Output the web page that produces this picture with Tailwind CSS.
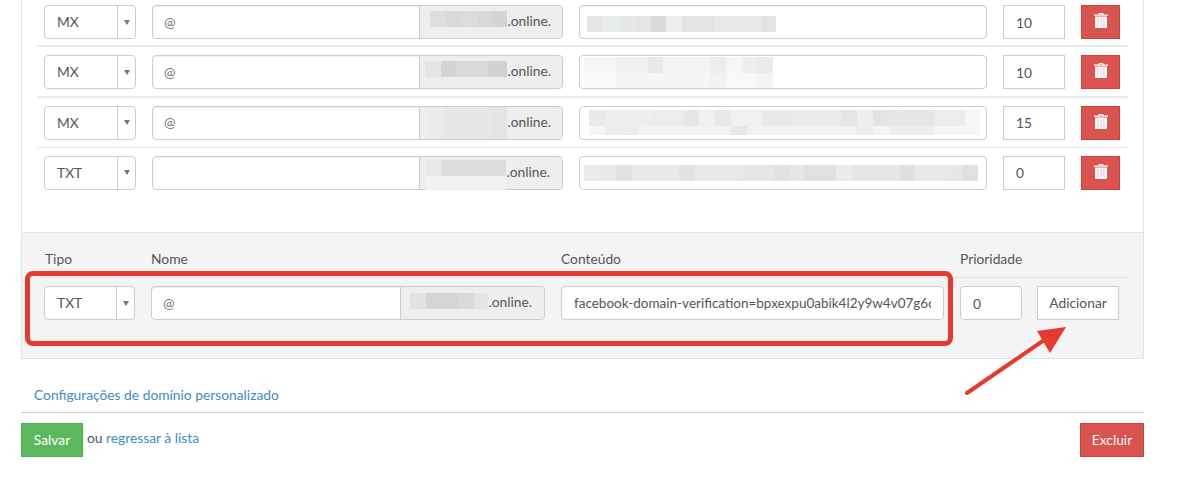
<!DOCTYPE html>
<html lang="pt">
<head>
<meta charset="utf-8">
<title>DNS</title>
<script src="https://cdn.jsdelivr.net/npm/@tailwindcss/browser@4"></script>
</head>
<body class="relative h-[497px] overflow-hidden bg-white font-[Lato,sans-serif] text-[13.8px] text-[#555]">
<main class="ml-[21px] w-[1123px]">
  <section class="border-x border-b border-[#cbe9f0]">
    <div class="h-[235px] -mt-[3px] px-[15px]">
      <!-- row 1 -->
      <div class="flex gap-4 h-[50.33px] pt-2 pl-[7px] border-b-2 border-[#e9e9e9]">
        <div class="flex w-[92px] h-[34px] rounded-[4px] border border-[#ccc] bg-white">
          <span class="flex-1 pl-3 leading-[32px]">MX</span>
          <span class="flex w-[18px] items-center justify-center border-l border-[#ccc]"><span class="border-x-[3.5px] border-t-[5px] border-x-transparent border-t-[#777]"></span></span>
        </div>
        <div class="flex w-[411px] h-[34px] rounded-[4px] border border-[#ccc] shadow-[inset_0_1px_1px_rgba(0,0,0,.075)]">
          <input value="@" class="flex-1 min-w-0 pl-[11px] text-[#777]">
          <div class="flex w-[143px] justify-end rounded-r-[4px] border-l border-[#ccc] bg-[#eee] pr-[11px]">
            <div class="mt-[5px] h-4 w-[77px] bg-[linear-gradient(90deg,#dedede_0_16px,#d9d9d9_16px_32px,#dcdcdc_32px_48px,#d8d8d8_48px_62px,#d4d4d4_62px)]"></div>
            <span class="leading-[30px]">.online.</span>
          </div>
        </div>
        <div class="w-[408px] h-[34px] rounded-[4px] border border-[#ccc] pl-[7px] pt-[10px] shadow-[inset_0_1px_1px_rgba(0,0,0,.075)]">
          <div class="h-4 w-[189px] bg-[linear-gradient(90deg,#e6e5e3_0_16px,#e8ebec_16px_32px,#e6e7e7_32px_48px,#e4e5e5_48px_64px,#dbdbd9_64px_79px,#eceef0_79px_95px,#e4e4e2_95px_127px,#e8e8e7_127px_174px,#e3e3e1_174px)]"></div>
        </div>
        <input value="10" class="w-[62px] h-[34px] border border-[#ccc] pl-3">
        <button class="flex w-[39px] h-[34px] items-center justify-center border border-[#d43f3a] bg-[#d9534f]" aria-label="Excluir">
          <svg class="-mt-1" width="14" height="16" viewBox="0 0 14 16"><path fill="#fff" d="M0 2.6h4.2l.7-1.6h4.200l.7 1.600H14v1.200H0zM5.500 2.600h3l-.3-.7H5.800zM1 4.500h12V15a1 1 0 0 1-1 1H2a1 1 0 0 1-1-1z"/><path fill="#f3c4d0" d="M3.500 6h1.200v8.500H3.500zM6.400 6h1.200v8.500H6.400zM9.300 6h1.200v8.500H9.300z"/></svg>
        </button>
      </div>
      <!-- row 2 -->
      <div class="flex gap-4 h-[50.33px] pt-2 pl-[7px] border-b-2 border-[#e9e9e9]">
        <div class="flex w-[92px] h-[34px] rounded-[4px] border border-[#ccc] bg-white">
          <span class="flex-1 pl-3 leading-[32px]">MX</span>
          <span class="flex w-[18px] items-center justify-center border-l border-[#ccc]"><span class="border-x-[3.5px] border-t-[5px] border-x-transparent border-t-[#777]"></span></span>
        </div>
        <div class="flex w-[411px] h-[34px] rounded-[4px] border border-[#ccc] shadow-[inset_0_1px_1px_rgba(0,0,0,.075)]">
          <input value="@" class="flex-1 min-w-0 pl-[11px] text-[#777]">
          <div class="flex w-[143px] justify-end rounded-r-[4px] border-l border-[#ccc] bg-[#eee] pr-[11px]">
            <div class="mt-[5px] h-4 w-[82px] bg-[linear-gradient(90deg,#e5e4e2_0_16px,#d3d4d6_16px_31px,#d9dadb_31px_63px,#d1d1d2_63px)]"></div>
            <span class="leading-[30px]">.online.</span>
          </div>
        </div>
        <div class="w-[408px] h-[34px] rounded-[4px] border border-[#ccc] pl-[4px] pt-[1px]">
          <div class="h-4 w-[189px] bg-[linear-gradient(90deg,#f6f6f6_0_32px,#f0f0ef_32px_64px,#e9e9e9_64px_79px,#f3f3f2_79px_126px,#ececec_126px_142px,#f6f6f6_142px_158px,#eeeeee_158px_173px,#ebebeb_173px)]"></div>
          <div class="h-[15px] w-[189px] bg-[linear-gradient(90deg,#f8f8f8_0_32px,#f5f5f5_32px_126px,#f2f2f2_126px_142px,#f8f8f8_142px_173px,#f4f4f4_173px)]"></div>
        </div>
        <input value="10" class="w-[62px] h-[34px] border border-[#ccc] pl-3">
        <button class="flex w-[39px] h-[34px] items-center justify-center border border-[#d43f3a] bg-[#d9534f]" aria-label="Excluir">
          <svg class="-mt-1" width="14" height="16" viewBox="0 0 14 16"><path fill="#fff" d="M0 2.6h4.2l.7-1.6h4.200l.7 1.600H14v1.200H0zM5.500 2.600h3l-.3-.7H5.800zM1 4.500h12V15a1 1 0 0 1-1 1H2a1 1 0 0 1-1-1z"/><path fill="#f3c4d0" d="M3.500 6h1.200v8.500H3.500zM6.400 6h1.200v8.500H6.400zM9.300 6h1.200v8.500H9.300z"/></svg>
        </button>
      </div>
      <!-- row 3 -->
      <div class="flex gap-4 h-[50.33px] pt-2 pl-[7px] border-b border-[#e4e4e4]">
        <div class="flex w-[92px] h-[34px] rounded-[4px] border border-[#ccc] bg-white">
          <span class="flex-1 pl-3 leading-[32px]">MX</span>
          <span class="flex w-[18px] items-center justify-center border-l border-[#ccc]"><span class="border-x-[3.5px] border-t-[5px] border-x-transparent border-t-[#777]"></span></span>
        </div>
        <div class="flex w-[411px] h-[34px] rounded-[4px] border border-[#ccc] shadow-[inset_0_1px_1px_rgba(0,0,0,.075)]">
          <input value="@" class="flex-1 min-w-0 pl-[11px] text-[#777]">
          <div class="flex w-[143px] justify-end rounded-r-[4px] border-l border-[#ccc] bg-[#eee] pr-[11px]">
            <div class="h-full w-[80px] bg-[linear-gradient(90deg,#ebebeb_0_16px,#e7e7e7_16px_64px,#e4e4e4_64px)]"></div>
            <span class="leading-[30px]">.online.</span>
          </div>
        </div>
        <div class="w-[408px] h-[34px] rounded-[4px] border border-[#ccc] pl-[9px] pt-[3px]">
          <div class="h-4 w-[391px] bg-[linear-gradient(90deg,#e9e9e9_0_16px,#eeeeee_16px_62px,#ececec_62px_95px,#e6e6e6_95px_110px,#f0f0f0_110px_126px,#e8e8e8_126px_142px,#f1f1f1_142px_173px,#e9e9e9_173px_205px,#ebebeb_205px_252px,#e5e5e5_252px_268px,#eeeeee_268px_284px,#e3e3e1_284px_300px,#e5e7ea_300px_316px,#e6e6e6_316px_346px,#ececec_346px_376px,#f6f6f6_376px)]"></div>
          <div class="h-[9px] w-[391px] bg-[linear-gradient(90deg,#f6f6f6_0_16px,#eeeeee_16px_32px,#ececec_32px_48px,#f2f2f2_48px_142px,#e6e7ea_142px_158px,#f2f2f2_158px_268px,#eeeeee_268px_284px,#f4f4f4_284px_300px,#eeeeee_300px_346px,#f6f6f6_346px)]"></div>
        </div>
        <input value="15" class="w-[62px] h-[34px] border border-[#ccc] pl-3">
        <button class="flex w-[39px] h-[34px] items-center justify-center border border-[#d43f3a] bg-[#d9534f]" aria-label="Excluir">
          <svg class="-mt-1" width="14" height="16" viewBox="0 0 14 16"><path fill="#fff" d="M0 2.6h4.2l.7-1.6h4.200l.7 1.600H14v1.200H0zM5.500 2.600h3l-.3-.7H5.800zM1 4.500h12V15a1 1 0 0 1-1 1H2a1 1 0 0 1-1-1z"/><path fill="#f3c4d0" d="M3.500 6h1.200v8.500H3.500zM6.400 6h1.200v8.500H6.400zM9.300 6h1.200v8.500H9.300z"/></svg>
        </button>
      </div>
      <!-- row 4 -->
      <div class="flex gap-4 h-[50.33px] pt-2 pl-[7px]">
        <div class="flex w-[92px] h-[34px] rounded-[4px] border border-[#ccc] bg-white">
          <span class="flex-1 pl-3 leading-[32px]">TXT</span>
          <span class="flex w-[18px] items-center justify-center border-l border-[#ccc]"><span class="border-x-[3.5px] border-t-[5px] border-x-transparent border-t-[#777]"></span></span>
        </div>
        <div class="flex w-[411px] h-[34px] rounded-[4px] border border-[#ccc] shadow-[inset_0_1px_1px_rgba(0,0,0,.075)]">
          <input value="" class="flex-1 min-w-0 pl-[11px] text-[#777]">
          <div class="flex w-[143px] justify-end rounded-r-[4px] border-l border-[#ccc] bg-[#eee] pr-[12px]">
            <div class="mt-[3px] w-[80px]">
              <div class="h-4 bg-[linear-gradient(90deg,#e8e8e8_0_16px,#dcdcdc_16px)]"></div>
              <div class="h-[14px] bg-[#f2f2f2]"></div>
            </div>
            <span class="leading-[30px]">.online.</span>
          </div>
        </div>
        <div class="w-[408px] h-[34px] rounded-[4px] border border-[#ccc] pl-[4px] pt-[8px]">
          <div class="h-4 w-[394px] bg-[linear-gradient(90deg,#ebebeb_0_16px,#e8e8e8_16px_32px,#e1e1df_32px_48px,#e9e9e9_48px_95px,#e2e2e2_95px_110px,#e8e8e8_110px_158px,#e6e6e4_158px_190px,#e1e1e1_190px_205px,#e6e6e6_205px_220px,#e0e0de_220px_252px,#e9ebed_252px_268px,#e6e6e6_268px_316px,#dfdfdf_316px_330px,#e8e8e6_330px_362px,#e5e7e9_362px_378px,#e0e0e0_378px)]"></div>
        </div>
        <input value="0" class="w-[62px] h-[34px] border border-[#ccc] pl-3">
        <button class="flex w-[39px] h-[34px] items-center justify-center border border-[#d43f3a] bg-[#d9534f]" aria-label="Excluir">
          <svg class="-mt-1" width="14" height="16" viewBox="0 0 14 16"><path fill="#fff" d="M0 2.6h4.2l.7-1.6h4.200l.7 1.600H14v1.200H0zM5.500 2.600h3l-.3-.7H5.800zM1 4.500h12V15a1 1 0 0 1-1 1H2a1 1 0 0 1-1-1z"/><path fill="#f3c4d0" d="M3.500 6h1.200v8.500H3.500zM6.400 6h1.200v8.500H6.400zM9.300 6h1.200v8.500H9.300z"/></svg>
        </button>
      </div>
    </div>
    <!-- add row -->
    <div class="h-[126px] border-t border-[#dfe6e8] bg-[#f4f4f4] px-[15px] pt-4">
      <div class="flex gap-4 h-[29px] pl-[7px] border-b border-[#e2e2e2] leading-5">
        <span class="w-[91px] pl-px">Tipo</span>
        <span class="w-[394px]">Nome</span>
        <span class="w-[383px]">Conteúdo</span>
        <span>Prioridade</span>
      </div>
      <div class="flex gap-4 pt-2 pl-[7px]">
        <div class="flex w-[91px] h-[34px] rounded-[4px] border border-[#ccc] bg-white">
          <span class="flex-1 pl-3 leading-[32px]">TXT</span>
          <span class="flex w-[18px] items-center justify-center border-l border-[#ccc]"><span class="border-x-[3.5px] border-t-[5px] border-x-transparent border-t-[#777]"></span></span>
        </div>
        <div class="flex w-[394px] h-[34px] rounded-[4px] border border-[#ccc] bg-white shadow-[inset_0_1px_1px_rgba(0,0,0,.075)]">
          <input value="@" class="flex-1 min-w-0 pl-[11px] text-[#777]">
          <div class="flex w-[144px] justify-end rounded-r-[4px] border-l border-[#ccc] bg-[#eee] pr-[12px]">
            <div class="mt-[6px] h-4 w-[78px] bg-[linear-gradient(90deg,#e2e2e2_0_16px,#d5d5d5_16px_48px,#dadada_48px_64px,#e4e4e4_64px)]"></div>
            <span class="leading-[30px]">.online.</span>
          </div>
        </div>
        <input value="facebook-domain-verification=bpxexpu0abik4l2y9w4v07g6c" class="w-[383px] h-[34px] rounded-[4px] border border-[#ccc] bg-white px-3 text-[13.5px]">
        <input value="0" class="w-[62px] h-[34px] rounded-[4px] border border-[#ccc] bg-white pl-3">
        <button class="-ml-px w-[82px] h-[34px] border border-[#ccc] bg-white">Adicionar</button>
      </div>
    </div>
  </section>
  <div class="mt-[26px] h-[28px] border-b border-[#ccc] pl-[13px] leading-5">
    <a href="#" class="text-[#428bca]">Configurações de domínio personalizado</a>
  </div>
  <div class="mt-[10px] flex items-start justify-between">
    <div class="flex items-start">
      <button class="w-[62px] h-[34px] border border-[#4cae4c] bg-[#5cb85c] text-white">Salvar</button>
      <span class="ml-1 mt-[5px]">ou <a href="#" class="text-[#428bca]">regressar à lista</a></span>
    </div>
    <button class="w-[64px] h-[34px] border border-[#d43f3a] bg-[#d9534f] text-white">Excluir</button>
  </div>
</main>
<!-- annotation overlay -->
<div class="absolute left-[25px] top-[271px] w-[928px] h-[75px] rounded-[8px] border-[5px] border-[#e63a2e]"></div>
<svg class="absolute left-0 top-0" width="1200" height="497" viewBox="0 0 1200 497" fill="none">
  <path d="M967 393L1050 336" stroke="#e63a2e" stroke-width="4" stroke-linecap="round"/>
  <path d="M1066 327L1037 331L1050 353Z" fill="#e63a2e"/>
</svg>
</body>
</html>
